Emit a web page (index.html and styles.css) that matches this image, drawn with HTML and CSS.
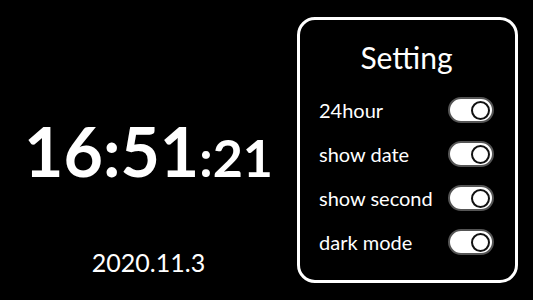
FILE: index.html
```html
<!DOCTYPE html>
<html>
<head>
<meta charset="utf-8">
<link rel="stylesheet" href="styles.css">
</head>
<body>
<div class="app">
  <div class="clock-area">
    <div class="time"><span class="hm">16:51</span><span class="sec">:21</span></div>
    <div class="date">2020.11.3</div>
  </div>
  <div class="panel">
    <div class="title">Setting</div>
    <div class="row"><span>24hour</span><span class="toggle"><span class="knob"></span></span></div>
    <div class="row"><span>show date</span><span class="toggle"><span class="knob"></span></span></div>
    <div class="row"><span>show second</span><span class="toggle"><span class="knob"></span></span></div>
    <div class="row"><span>dark mode</span><span class="toggle"><span class="knob"></span></span></div>
  </div>
</div>
</body>
</html>
```
FILE: styles.css
```css
html, body {
  margin: 0;
  padding: 0;
  background: #000;
  color: #fff;
  font-family: Lato, "Open Sans", sans-serif;
}
.app {
  width: 533px;
  height: 300px;
  display: flex;
  box-sizing: border-box;
  padding: 17px 15px 17px 0;
}
.clock-area {
  width: 297px;
  display: flex;
  flex-direction: column;
  align-items: center;
}
.time {
  margin-top: 100px;
  line-height: 1;
  white-space: nowrap;
  font-weight: 700;
}
.hm {
  font-size: 68px;
}
.sec {
  font-size: 52px;
}
.date {
  margin-top: 65px;
  font-size: 25px;
  line-height: 1;
}
.panel {
  width: 221px;
  height: 266px;
  box-sizing: border-box;
  border: 3px solid #fff;
  border-radius: 18px;
  padding: 19px 21px 0 19px;
  display: flex;
  flex-direction: column;
}
.title {
  text-align: center;
  font-size: 30px;
  line-height: 36px;
  margin-bottom: 13px;
}
.row {
  display: flex;
  justify-content: space-between;
  align-items: center;
  height: 44px;
  font-size: 20px;
}
.toggle {
  width: 46px;
  height: 26px;
  box-sizing: border-box;
  border: 2px solid #555;
  border-radius: 13px;
  background: #fff;
  display: flex;
  align-items: center;
  justify-content: flex-end;
  padding-right: 2px;
}
.knob {
  width: 19px;
  height: 19px;
  box-sizing: border-box;
  border: 2px solid #111;
  border-radius: 50%;
  background: #fff;
}
```
